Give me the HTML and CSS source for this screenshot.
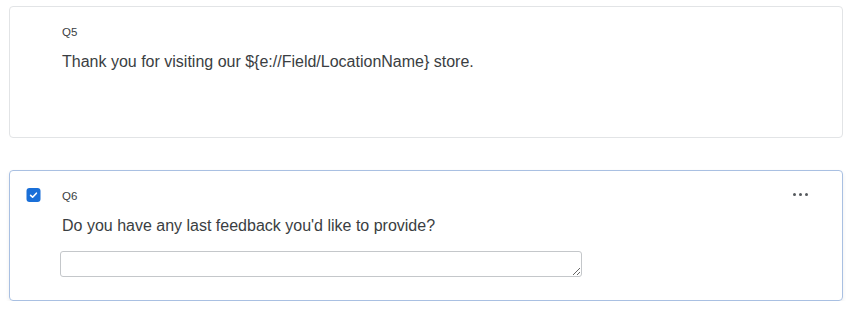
FILE: index.html
```html
<!DOCTYPE html>
<html>
<head>
<meta charset="utf-8">
<link rel="stylesheet" href="styles.css">
</head>
<body>
<div class="page">
  <div class="card first">
    <div class="qhead">Q5</div>
    <div class="qtext">Thank you for visiting our ${e://Field/LocationName} store.</div>
  </div>
  <div class="card selected">
    <div class="check">
      <svg width="15" height="15" viewBox="0 0 15 15"><rect x="0.5" y="0" width="14" height="14" rx="3" fill="#1a6fd8"/><path d="M4.6 7.4 L6.6 9.2 L10.4 5.2" fill="none" stroke="#fff" stroke-width="1.6" stroke-linecap="round" stroke-linejoin="round"/></svg>
    </div>
    <div class="more"><span></span><span></span><span></span></div>
    <div class="qhead">Q6</div>
    <div class="qtext">Do you have any last feedback you'd like to provide?</div>
    <textarea class="answer"></textarea>
  </div>
</div>
</body>
</html>
```
FILE: styles.css
```css
html, body { margin: 0; padding: 0; background: #fff; }
body { font-family: "Liberation Sans", Arial, sans-serif; color: #3a3e42; }
.page { padding: 6px 7px 0 9px; display: flex; flex-direction: column; gap: 32px; }
.card {
  position: relative;
  border: 1px solid #e2e4e6;
  border-radius: 4px;
  height: 131px;
  box-sizing: border-box;
  padding: 17px 0 0 52px;
}
.card.first { height: 132px; }
.card.selected {
  border-color: #a9c0e2;
  box-shadow: 0 2px 4px rgba(0,0,0,0.07);
}
.qhead { font-size: 11.5px; line-height: 16px; height: 16px; color: #3a3e42; }
.qtext { margin-top: 12px; font-size: 16px; line-height: 20px; color: #3a3e42; }
.check { position: absolute; left: 16px; top: 17px; width: 15px; height: 15px; }
.check svg { display: block; }
.more { position: absolute; left: 783px; top: 22px; display: flex; gap: 3px; }
.more span { width: 3px; height: 3px; border-radius: 50%; background: #55595d; }
.answer {
  display: block;
  margin: 15px 0 0 -2px;
  width: 522px; height: 26px;
  box-sizing: border-box;
  border: 1px solid #c4c7ca;
  border-radius: 3px;
  resize: vertical;
  font-family: inherit;
}
```
